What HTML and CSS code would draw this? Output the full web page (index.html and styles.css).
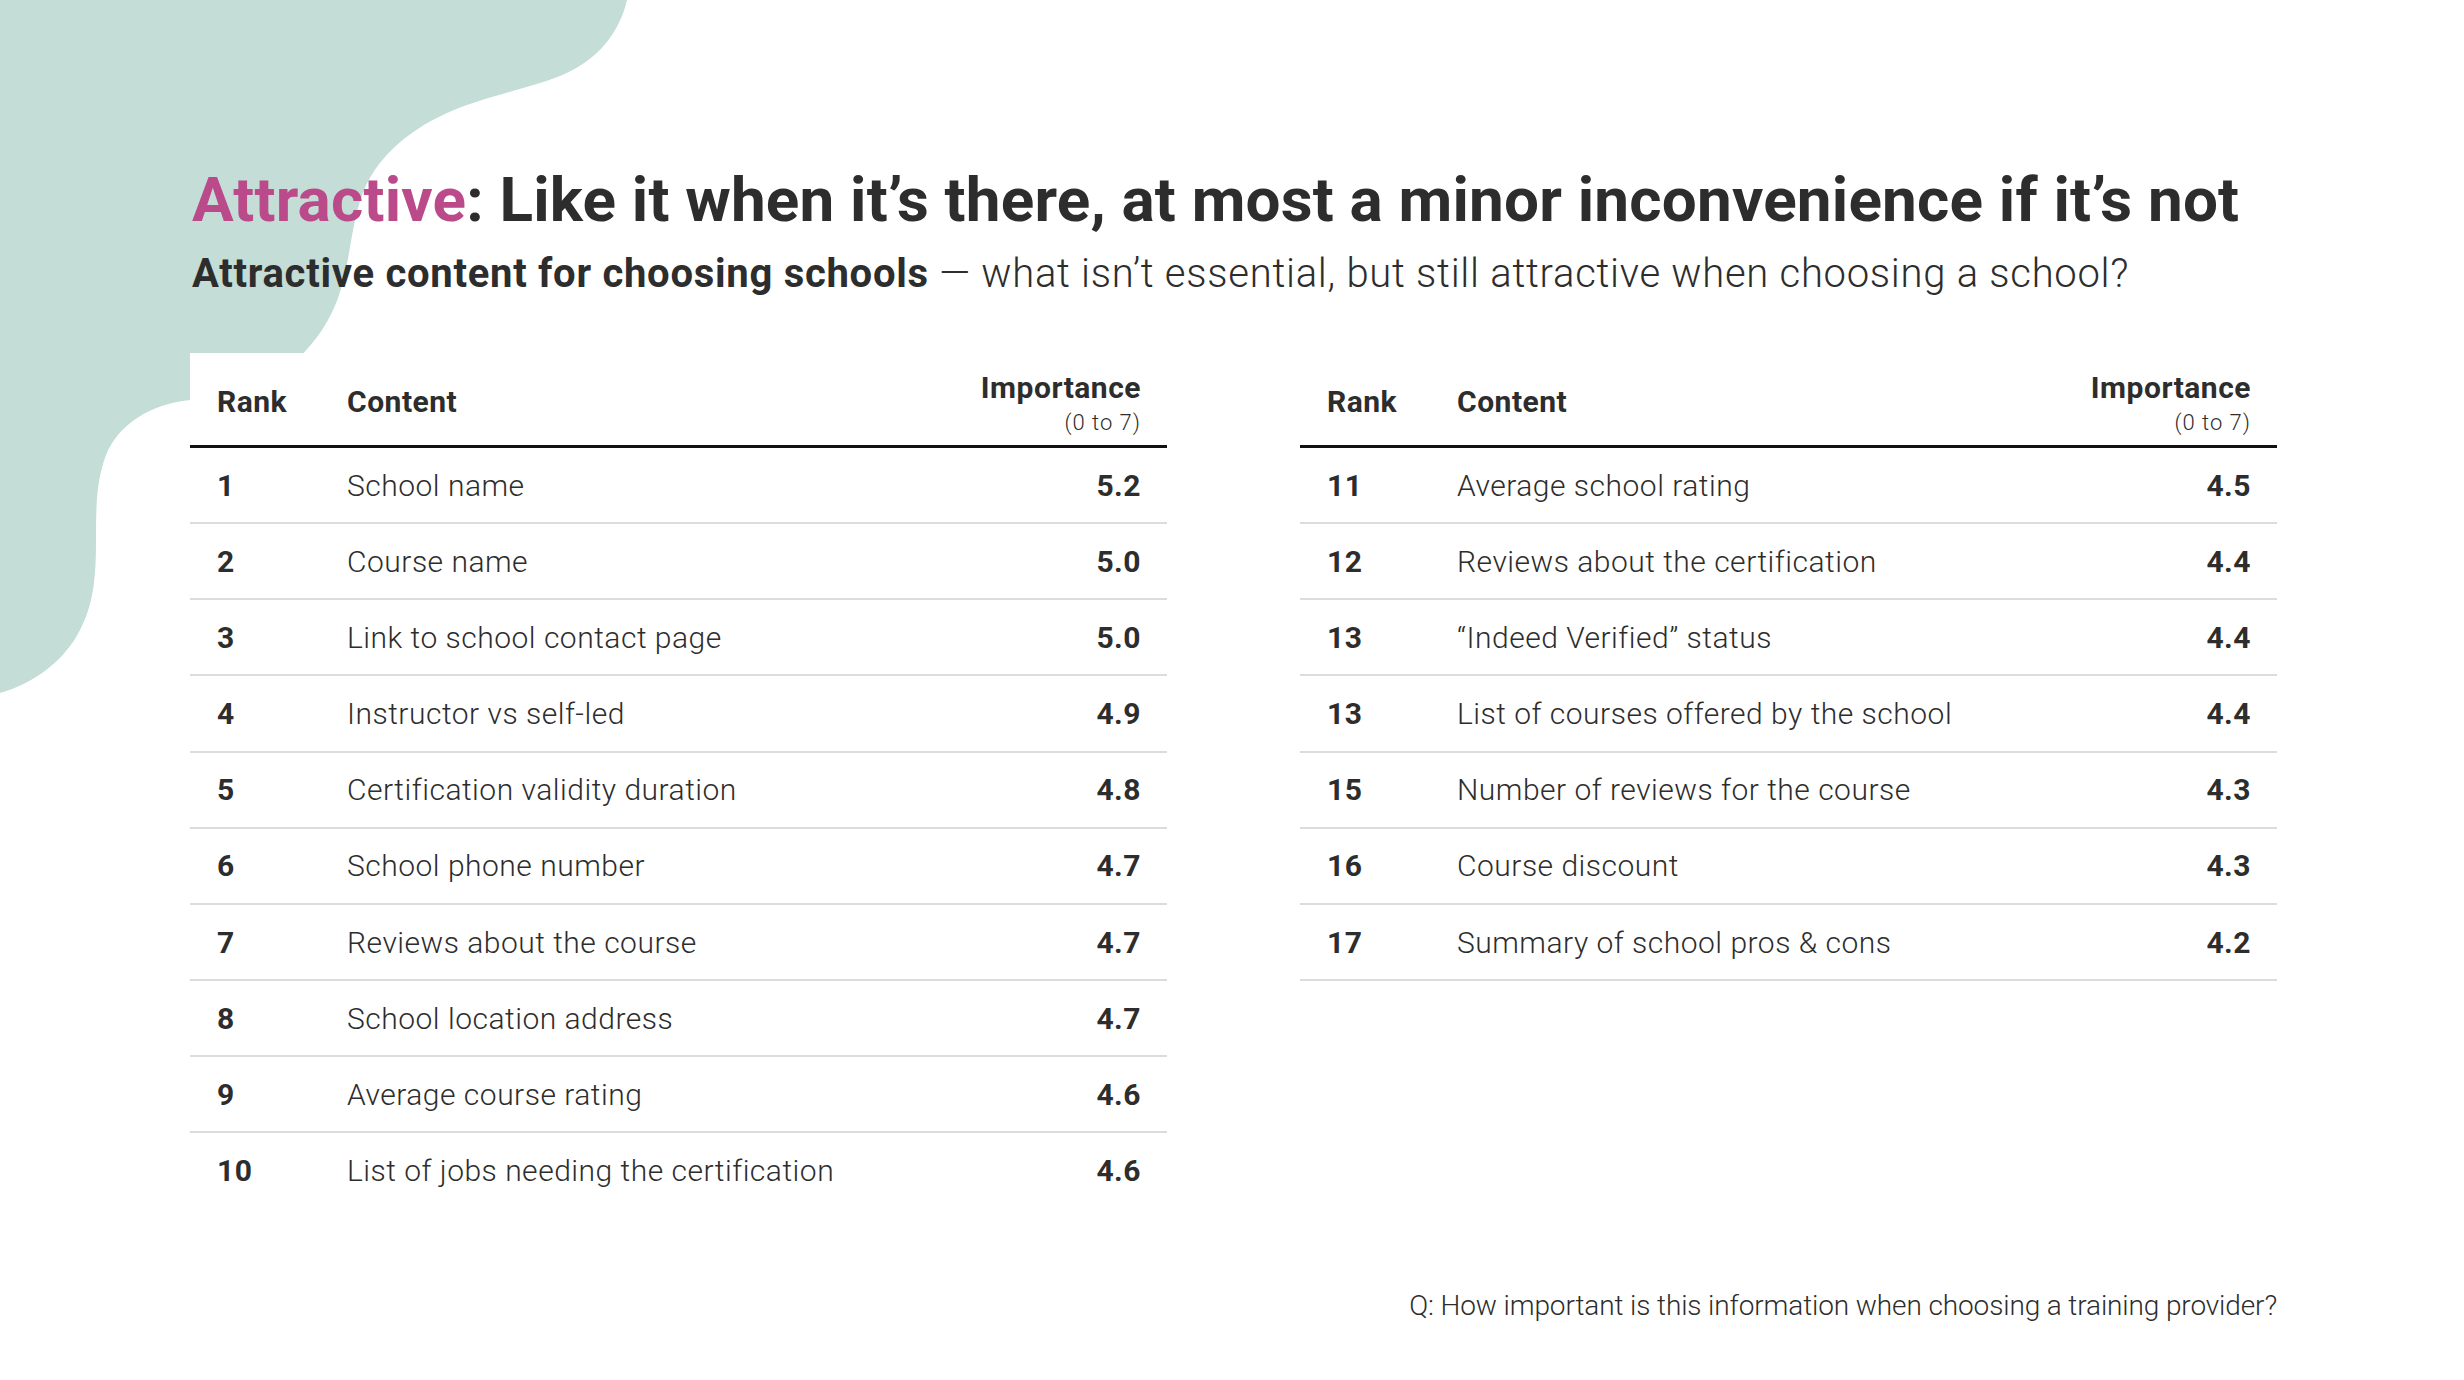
FILE: index.html
```html
<!DOCTYPE html>
<html lang="en">
<head>
<meta charset="utf-8">
<title>Attractive content for choosing schools</title>
<link rel="stylesheet" href="styles.css">
</head>
<body>
<div class="page">
  <svg class="blob" width="700" height="720" viewBox="0 0 700 720" aria-hidden="true">
    <path d="M0,0 L627,0 C620,30 600,60 560,76 C530,88 480,98 447,113 C405,132 375,160 362,195 C350,230 350,265 338,298 C328,325 315,342 295,362 L190,400 C150,404 118,425 106,455 C97,480 96,500 96,540 C96,580 93,605 80,630 C65,660 35,683 0,693 Z" fill="#c4ddd6"/>
  </svg>

  <header class="heading">
    <h1 class="title"><span class="accent">Attractive</span>: Like it when it’s there, at most a minor inconvenience if it’s not</h1>
    <p class="subtitle"><strong>Attractive content for choosing schools</strong> — what isn’t essential, but still attractive when choosing a school?</p>
  </header>

  <div class="tables">
    <div class="table">
      <div class="row head">
        <div class="c-rank">Rank</div>
        <div class="c-content">Content</div>
        <div class="c-value"><span class="imp">Importance</span><span class="scale">(0 to 7)</span></div>
      </div>
      <div class="row"><div class="c-rank">1</div><div class="c-content">School name</div><div class="c-value">5.2</div></div>
      <div class="row"><div class="c-rank">2</div><div class="c-content">Course name</div><div class="c-value">5.0</div></div>
      <div class="row"><div class="c-rank">3</div><div class="c-content">Link to school contact page</div><div class="c-value">5.0</div></div>
      <div class="row"><div class="c-rank">4</div><div class="c-content">Instructor vs self-led</div><div class="c-value">4.9</div></div>
      <div class="row"><div class="c-rank">5</div><div class="c-content">Certification validity duration</div><div class="c-value">4.8</div></div>
      <div class="row"><div class="c-rank">6</div><div class="c-content">School phone number</div><div class="c-value">4.7</div></div>
      <div class="row"><div class="c-rank">7</div><div class="c-content">Reviews about the course</div><div class="c-value">4.7</div></div>
      <div class="row"><div class="c-rank">8</div><div class="c-content">School location address</div><div class="c-value">4.7</div></div>
      <div class="row"><div class="c-rank">9</div><div class="c-content">Average course rating</div><div class="c-value">4.6</div></div>
      <div class="row last"><div class="c-rank">10</div><div class="c-content">List of jobs needing the certification</div><div class="c-value">4.6</div></div>
    </div>

    <div class="table">
      <div class="row head">
        <div class="c-rank">Rank</div>
        <div class="c-content">Content</div>
        <div class="c-value"><span class="imp">Importance</span><span class="scale">(0 to 7)</span></div>
      </div>
      <div class="row"><div class="c-rank">11</div><div class="c-content">Average school rating</div><div class="c-value">4.5</div></div>
      <div class="row"><div class="c-rank">12</div><div class="c-content">Reviews about the certification</div><div class="c-value">4.4</div></div>
      <div class="row"><div class="c-rank">13</div><div class="c-content">“Indeed Verified” status</div><div class="c-value">4.4</div></div>
      <div class="row"><div class="c-rank">13</div><div class="c-content">List of courses offered by the school</div><div class="c-value">4.4</div></div>
      <div class="row"><div class="c-rank">15</div><div class="c-content">Number of reviews for the course</div><div class="c-value">4.3</div></div>
      <div class="row"><div class="c-rank">16</div><div class="c-content">Course discount</div><div class="c-value">4.3</div></div>
      <div class="row"><div class="c-rank">17</div><div class="c-content">Summary of school pros &amp; cons</div><div class="c-value">4.2</div></div>
    </div>
  </div>

  <p class="footnote">Q: How important is this information when choosing a training provider?</p>
</div>
</body>
</html>
```

FILE: styles.css
```css
* {
  box-sizing: border-box;
}

html, body {
  margin: 0;
  padding: 0;
  background: #ffffff;
}

body {
  font-family: Roboto, "Liberation Sans", Arial, sans-serif;
  color: #2d2d2d;
}

.page {
  position: relative;
  width: 2464px;
  height: 1380px;
  overflow: hidden;
  padding: 164px 187px 0 190px;
  background: #ffffff;
}

.blob {
  position: absolute;
  left: 0;
  top: 0;
  z-index: 0;
}

.heading {
  position: relative;
  z-index: 1;
  padding-left: 2px;
}

.title {
  margin: 0;
  font-size: 62px;
  line-height: 72px;
  font-weight: 700;
  letter-spacing: 0.2px;
  color: #2d2d2d;
  white-space: nowrap;
}

.accent {
  color: #ba4a89;
}

.subtitle {
  margin: 14px 0 0 0;
  font-size: 40px;
  line-height: 47px;
  font-weight: 300;
  letter-spacing: 0.72px;
  color: #2d2d2d;
  white-space: nowrap;
}

.subtitle strong {
  font-weight: 700;
}

.tables {
  position: relative;
  z-index: 1;
  display: flex;
  gap: 133px;
  margin-top: 56px;
  align-items: flex-start;
}

.table {
  width: 977px;
  background: #ffffff;
}

.row {
  display: grid;
  grid-template-columns: 130px 1fr auto;
  align-items: center;
  height: 76.16px;
  padding: 0 26px 0 27px;
  border-bottom: 2px solid #dcdcdc;
  font-size: 30px;
  line-height: 35px;
  letter-spacing: 0.5px;
}

.row.last {
  border-bottom-color: transparent;
}

.row.head {
  height: 95px;
  align-items: end;
  border-bottom: 3px solid #111111;
  padding-bottom: 0;
}

.c-rank {
  font-weight: 700;
}

.c-content {
  font-weight: 300;
  white-space: nowrap;
}

.c-value {
  font-weight: 700;
  text-align: right;
}

.head .c-rank,
.head .c-content {
  font-weight: 700;
  padding-bottom: 26px;
}

.head .c-value {
  display: flex;
  flex-direction: column;
  align-items: flex-end;
  padding-bottom: 4px;
}

.imp {
  font-weight: 700;
  line-height: 35px;
}

.scale {
  font-size: 22px;
  font-weight: 300;
  line-height: 36px;
  letter-spacing: 1px;
}

.footnote {
  position: relative;
  z-index: 1;
  margin: 79px 0 0 0;
  text-align: right;
  font-size: 28px;
  line-height: 33px;
  font-weight: 300;
  letter-spacing: -0.12px;
  color: #2d2d2d;
}
```
